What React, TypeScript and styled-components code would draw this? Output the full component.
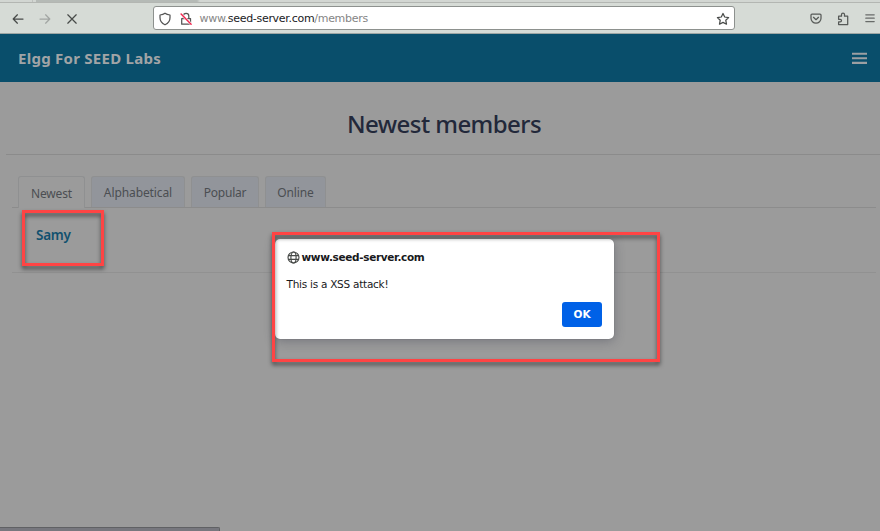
import React from "react";
import styled, { createGlobalStyle } from "styled-components";

const GlobalStyle = createGlobalStyle`
  * { box-sizing: border-box; }
  body { margin: 0; overflow: hidden; background: #9b9b9b; }
`;

const Window = styled.div`
  position: relative;
  display: flex;
  flex-direction: column;
  width: 880px;
  height: 531px;
  overflow: hidden;
  background: #9b9b9b;
  font-family: "Noto Sans", "Open Sans", sans-serif;
`;

const TabStrip = styled.div`
  display: flex;
  flex: none;
  height: 3px;
  background: #d2d6d2;
  border-bottom: 1px solid #b3b6b2;
`;

const BrowserTab = styled.div`
  width: 168px;
  height: 2px;
  margin-left: 32px;
  border-left: 1px solid #bec1be;
  background: linear-gradient(to right, #d2d6d2 3px, #b5bab6 3px, #b5bab6 164px, #d2d6d2 167px);
`;

const Toolbar = styled.div`
  display: flex;
  flex: none;
  align-items: center;
  height: 31px;
  padding: 0 4px 0 11px;
  background: #d6dbd6;
  border-bottom: 1px solid #9da5a3;
`;

const Navigation = styled.div`
  display: flex;
  gap: 13px;
  width: 142px;
  padding-top: 2px;
`;

const AddressBar = styled.div`
  display: flex;
  align-items: center;
  width: 582px;
  height: 24px;
  padding: 2px 4px 0 4px;
  border: 1px solid #8d918e;
  border-radius: 3px;
  background: #fff;
`;

const Address = styled.div`
  flex: 1;
  margin-left: 6.5px;
  color: #858585;
  font: 11px/20px "DejaVu Sans", sans-serif;
  letter-spacing: -0.3px;
  white-space: nowrap;
`;

const Host = styled.span`
  color: #202124;
`;

const ToolbarActions = styled.div`
  display: flex;
  align-items: center;
  gap: 13px;
  margin-left: auto;
  margin-right: -1px;
  padding-top: 2px;
`;

const Icon = styled.svg<{ $size?: number; $color?: string }>`
  display: block;
  flex: none;
  width: ${(p) => p.$size ?? 14}px;
  height: ${(p) => p.$size ?? 14}px;
  color: ${(p) => p.$color ?? "#484b49"};
  fill: none;
  stroke: currentColor;
  stroke-width: 1.25;
  stroke-linecap: round;
  stroke-linejoin: round;
`;

const LockIcon = styled(Icon)`
  margin-left: 7px;
`;

const SiteHeader = styled.header`
  display: flex;
  flex: none;
  align-items: center;
  justify-content: space-between;
  height: 48px;
  padding: 0 13px 0 18px;
  background: #094e6b;
`;

const Brand = styled.div`
  color: #a1a4a6;
  font-size: 15px;
  font-weight: 700;
  line-height: 20px;
  letter-spacing: 0.26px;
  white-space: nowrap;
`;

const MenuButton = styled.div`
  width: 15px;
  height: 12px;
`;

const MenuIcon = styled(Icon)`
  stroke-width: 2.1;
  stroke-linecap: butt;
`;

const Heading = styled.div`
  flex: none;
  height: 73px;
  margin-left: 6px;
  border-bottom: 1px solid #8b8b8b;
`;

const Title = styled.h1`
  margin: 0;
  padding: 25px 0 0 2px;
  color: #22283a;
  font-size: 24px;
  font-weight: 500;
  line-height: 34px;
  letter-spacing: -0.56px;
  text-align: center;
`;

const Tabs = styled.nav`
  display: flex;
  flex: none;
  align-items: flex-end;
  gap: 6px;
  height: 53px;
  margin: 0 4px 0 12px;
  padding-left: 6px;
  border-bottom: 1px solid #8c8c8c;
`;

const Tab = styled.div<{ $width: number; $active?: boolean; $tracking: number }>`
  width: ${(p) => p.$width}px;
  height: ${(p) => (p.$active ? 32 : 31)}px;
  margin-bottom: ${(p) => (p.$active ? -1 : 0)}px;
  border: 1px solid #8f9091;
  border-bottom: 0;
  border-radius: 3px 3px 0 0;
  background: ${(p) => (p.$active ? "#9b9b9b" : "#92959b")};
  color: #4b4e52;
  font-size: 12px;
  line-height: ${(p) => (p.$active ? 33 : 31)}px;
  letter-spacing: ${(p) => p.$tracking}px;
  text-align: center;
  white-space: nowrap;
`;

const MemberRow = styled.div`
  flex: none;
  height: 65px;
  margin: 0 4px 0 12px;
  padding: 17px 24px;
  border-bottom: 1px solid #919191;
`;

const MemberName = styled.a`
  display: block;
  color: #11516f;
  font-size: 13.5px;
  font-weight: 600;
  line-height: 20px;
  letter-spacing: -0.3px;
`;

const Marker = styled.div<{ $x: number; $y: number; $w: number; $h: number }>`
  position: absolute;
  left: ${(p) => p.$x}px;
  top: ${(p) => p.$y}px;
  width: ${(p) => p.$w}px;
  height: ${(p) => p.$h}px;
  border: 3px solid #ff4444;
  filter: drop-shadow(0 3px 2px rgba(0, 0, 0, 0.55));
`;

const Dialog = styled.div`
  position: absolute;
  left: 275px;
  top: 239px;
  display: flex;
  flex-direction: column;
  width: 339px;
  height: 100px;
  padding: 11px 12px 12px 11.5px;
  border-radius: 5px;
  background: #fff;
  box-shadow: 0 2px 11px rgba(48, 50, 68, 0.36), 0 0 1px #666;
  color: #18191c;
  font: 10.5px/14px "DejaVu Sans", sans-serif;
`;

const DialogOrigin = styled.div`
  display: flex;
  align-items: center;
  gap: 2px;
  font-weight: 700;
  letter-spacing: -0.34px;
`;

const DialogMessage = styled.div`
  margin-top: 13px;
  letter-spacing: -0.26px;
`;

const OkButton = styled.button`
  width: 40px;
  height: 25px;
  margin: auto 0 0 auto;
  padding: 0;
  border: 0;
  border-radius: 3px;
  background: #0061e7;
  color: #fff;
  font: bold 10.5px/25px "DejaVu Sans", sans-serif;
`;

const StatusPanel = styled.div`
  position: absolute;
  left: -1px;
  bottom: 0;
  width: 221px;
  height: 4px;
  border: 1px solid #606164;
  border-bottom: 0;
  border-radius: 0 2px 0 0;
  background: #77777e;
`;

export default function App() {
  return (
    <Window>
      <GlobalStyle />
      <TabStrip><BrowserTab /></TabStrip>
      <Toolbar>
        <Navigation>
          <Icon viewBox="0 0 14 14"><path d="M12 7H2.2M6.4 2.8 2.2 7l4.2 4.2" /></Icon>
          <Icon viewBox="0 0 14 14" $color="#a2a6a3"><path d="M2 7h9.8M7.6 2.8 11.8 7l-4.2 4.2" /></Icon>
          <Icon viewBox="0 0 14 14"><path d="m2.8 2.8 8.4 8.4m0-8.4-8.4 8.4" /></Icon>
        </Navigation>
        <AddressBar>
          <Icon viewBox="0 0 14 14" $color="#555"><path d="M7 1.2c1.4 1.1 3.1 1.6 5 1.8v2.7c0 3.2-1.7 5.5-5 7.1C3.7 11.2 2 8.9 2 5.7V3c1.9-.2 3.6-.7 5-1.8Z" /></Icon>
          <LockIcon viewBox="0 0 14 14" $color="#555">
            <path d="M4.4 6V4a2.7 2.7 0 0 1 5.4 0v2M2.7 6.5h8.8v5.7H2.7z" />
            <path d="m2.1 2 10 10.2" stroke="#fff" strokeWidth="2.6" />
            <path d="m2.1 2 10 10.2" stroke="#f02850" strokeWidth="1.5" />
          </LockIcon>
          <Address>www.<Host>seed-server.com</Host>/members</Address>
          <Icon viewBox="0 0 14 14"><path d="m7 1.5 1.7 3.5 3.9.6-2.8 2.7.7 3.9L7 10.4l-3.5 1.8.7-3.9-2.8-2.7L5.3 5Z" /></Icon>
        </AddressBar>
        <ToolbarActions>
          <Icon viewBox="0 0 14 14" $color="#565957"><path d="M3 2h8a1 1 0 0 1 1 1v3.2a5 5 0 0 1-10 0V3a1 1 0 0 1 1-1ZM4.5 5.3 7 7.7l2.5-2.4" /></Icon>
          <Icon viewBox="0 0 14 14" $color="#565957"><path d="M2.6 4.2h2.9V2.5a1.5 1.5 0 0 1 3 0v1.7h3.2v8.3H2.6V9.9h1.6a1.3 1.3 0 0 0 0-2.6H2.6Z" /></Icon>
          <Icon viewBox="0 0 14 14" $color="#686b69"><path d="M2.8 2.8h8.4M2.8 6.2h8.4M2.8 9.6h8.4" /></Icon>
        </ToolbarActions>
      </Toolbar>
      <SiteHeader>
        <Brand>Elgg For SEED Labs</Brand>
        <MenuButton>
          <MenuIcon viewBox="0 0 15 15" $size={15} $color="#9c9fa2">
            <path d="M0 1.8h15M0 6.3h15M0 10.9h15" />
          </MenuIcon>
        </MenuButton>
      </SiteHeader>
      <Heading><Title>Newest members</Title></Heading>
      <Tabs>
        <Tab $width={67} $active $tracking={-0.15}>Newest</Tab>
        <Tab $width={94} $tracking={-0.1}>Alphabetical</Tab>
        <Tab $width={68} $tracking={-0.2}>Popular</Tab>
        <Tab $width={61} $tracking={-0.15}>Online</Tab>
      </Tabs>
      <MemberRow><MemberName>Samy</MemberName></MemberRow>
      <StatusPanel />
      <Dialog>
        <DialogOrigin>
          <Icon viewBox="0 0 14 14" $size={13}>
            <circle cx="7" cy="7" r="5.9" /><ellipse cx="7" cy="7" rx="2.8" ry="5.9" /><path d="M1.6 5h10.8M1.6 9h10.8" />
          </Icon>
          www.seed-server.com
        </DialogOrigin>
        <DialogMessage>This is a XSS attack!</DialogMessage>
        <OkButton>OK</OkButton>
      </Dialog>
      <Marker $x={22} $y={210} $w={82} $h={56} />
      <Marker $x={272} $y={232} $w={388} $h={130} />
    </Window>
  );
}
